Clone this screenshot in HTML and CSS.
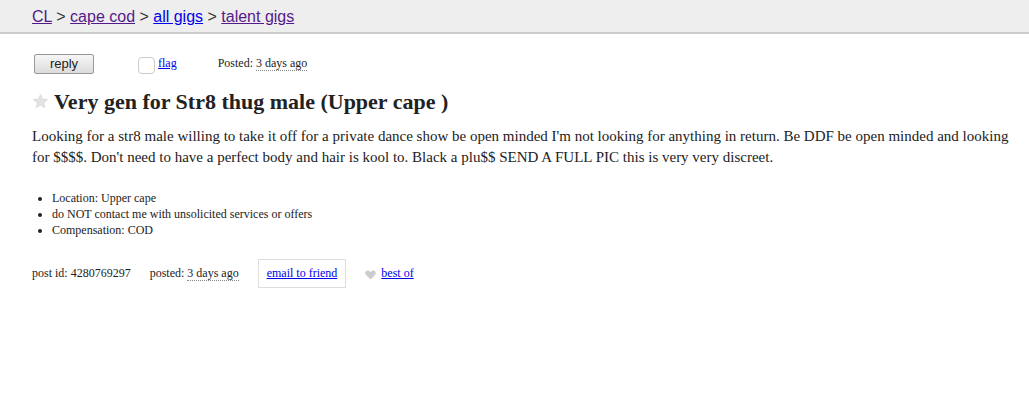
FILE: index.html
```html
<!DOCTYPE html>
<html>
<head>
<meta charset="utf-8">
<link rel="stylesheet" href="styles.css">
</head>
<body>
<header class="bar">
  <nav class="crumbs">
    <a class="visited" href="#">CL</a> &gt; <a class="visited" href="#">cape cod</a> &gt; <a class="fresh" href="#">all gigs</a> &gt; <a class="visited" href="#">talent gigs</a>
  </nav>
</header>
<main class="page">
  <div class="actions">
    <button class="reply">reply</button>
    <span class="flagbox"></span><a class="flag" href="#">flag</a>
    <span class="posted">Posted: <span class="time">3 days ago</span></span>
  </div>
  <h2 class="title"><span class="star">&#9733;</span>Very gen for Str8 thug male (Upper cape )</h2>
  <p class="body">Looking for a str8 male willing to take it off for a private dance show be open minded I'm not looking for anything in return. Be DDF be open minded and looking for $$$$. Don't need to have a perfect body and hair is kool to. Black a plu$$ SEND A FULL PIC this is very very discreet.</p>
  <ul class="notices">
    <li>Location: Upper cape</li>
    <li>do NOT contact me with unsolicited services or offers</li>
    <li>Compensation: COD</li>
  </ul>
  <div class="footer">
    <span class="pid">post id: 4280769297</span>
    <span class="fposted">posted: <span class="time">3 days ago</span></span>
    <span class="email"><a href="#">email to friend</a></span>
    <span class="bestof"><svg class="heart" width="11" height="10" viewBox="0 0 11 10"><path d="M5.5 9.5 L1 5 C-0.5 3.3 0.3 0.5 2.8 0.5 C4.2 0.5 5 1.5 5.5 2.3 C6 1.5 6.8 0.5 8.2 0.5 C10.7 0.5 11.5 3.3 10 5 Z" fill="#ccc"/></svg><a href="#">best of</a></span>
  </div>
</main>
</body>
</html>
```
FILE: styles.css
```css
body {
  margin: 0;
  font-family: "Liberation Serif", "Times New Roman", serif;
  color: #222;
  background: #fff;
}
.bar {
  background: #eee;
  border-bottom: 2px solid #ccc;
  height: 34px;
  box-sizing: border-box;
  padding: 7px 0 0 32px;
}
.crumbs {
  font-family: "Liberation Sans", Arial, sans-serif;
  font-size: 16px;
  line-height: 20px;
  color: #333;
}
.crumbs a.visited { color: #551a8b; }
.crumbs a.fresh { color: #0000ee; }
.page {
  padding: 0 16px 0 32px;
}
.actions {
  display: flex;
  align-items: center;
  margin-top: 19px;
  padding-left: 2px;
  height: 21px;
  font-size: 12px;
}
.reply {
  width: 60px;
  height: 20px;
  padding: 0;
  font-family: "Liberation Sans", Arial, sans-serif;
  font-size: 13px;
  color: #222;
  border: 1px solid #999;
  border-radius: 2px;
  background: linear-gradient(#f6f6f6, #dcdcdc);
}
.flagbox {
  width: 15px;
  height: 15px;
  border: 1px solid #ccc;
  border-radius: 4px;
  margin-left: 44px;
  margin-top: 3px;
  background: #fff;
}
.flag {
  color: #0000ee;
  margin-left: 3px;
  font-size: 12px;
}
.posted {
  margin-left: 41px;
  font-size: 12px;
}
.time {
  border-bottom: 1px dotted #888;
}
.title {
  font-size: 22px;
  font-weight: bold;
  margin: 16px 0 0 0;
  line-height: 24px;
  display: flex;
  align-items: center;
}
.star {
  color: #e4e4e4;
  font-size: 19px;
  font-weight: normal;
  margin-right: 5px;
  text-shadow: 0 0 1px #aaa;
}
.body {
  font-size: 15px;
  line-height: 21px;
  margin: 12px 0 0 0;
}
.notices {
  font-size: 12px;
  line-height: 16px;
  margin: 22px 0 0 0;
  padding-left: 20px;
}
.footer {
  display: flex;
  align-items: center;
  margin-top: 21px;
  font-size: 12px;
}
.fposted { margin-left: 19px; }
.email {
  margin-left: 19px;
  border: 1px solid #ddd;
  padding: 6px 8px;
}
.email a, .bestof a { color: #0000ee; }
.bestof {
  margin-left: 19px;
  display: flex;
  align-items: center;
}
.heart { margin-right: 5px; margin-top: 2px; }
```
